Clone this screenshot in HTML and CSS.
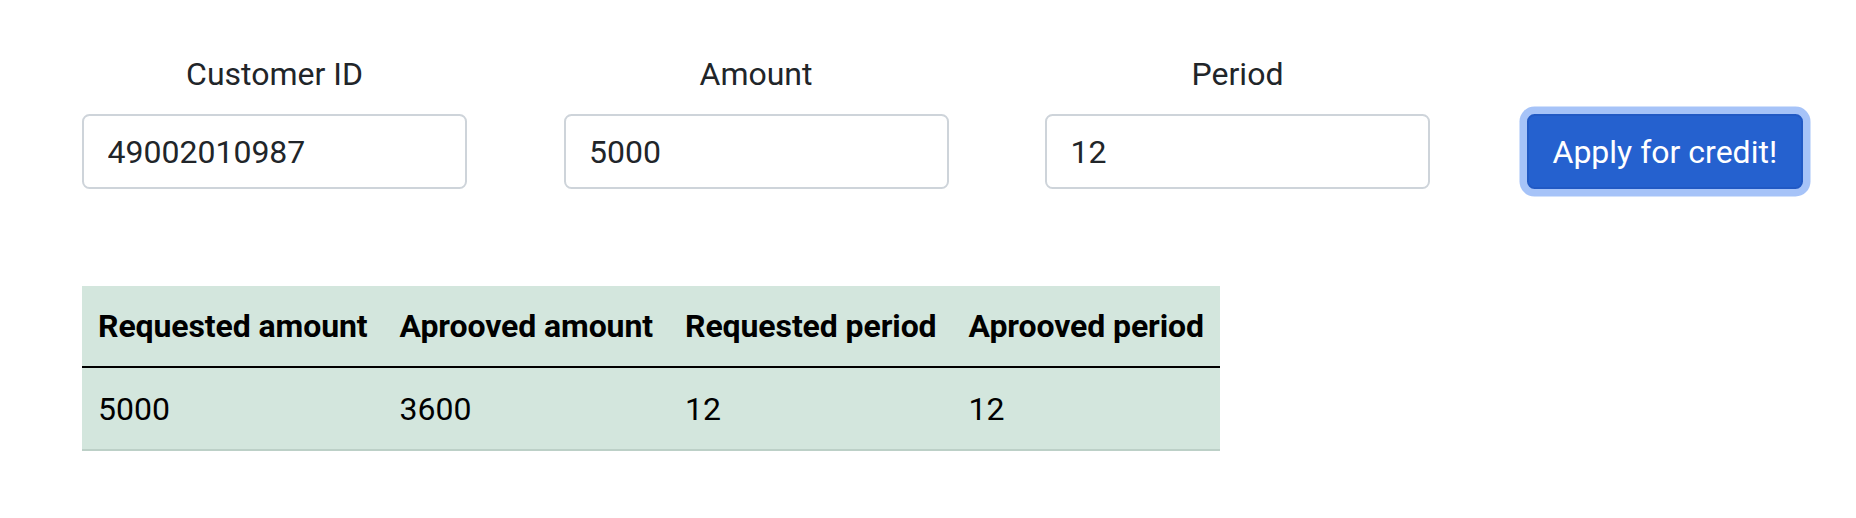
FILE: index.html
```html
<!DOCTYPE html>
<html lang="en">
<head>
<meta charset="utf-8">
<title>Credit application</title>
<link rel="stylesheet" href="styles.css">
</head>
<body>
<div class="page">
  <form class="form">
    <div class="field">
      <label class="label" for="cid">Customer ID</label>
      <input class="input" id="cid" type="text" value="49002010987">
    </div>
    <div class="field">
      <label class="label" for="amount">Amount</label>
      <input class="input" id="amount" type="text" value="5000">
    </div>
    <div class="field">
      <label class="label" for="period">Period</label>
      <input class="input" id="period" type="text" value="12">
    </div>
    <div class="action">
      <button class="btn" type="button">Apply for credit!</button>
    </div>
  </form>
  <table class="result">
    <thead>
      <tr>
        <th>Requested amount</th>
        <th>Aprooved amount</th>
        <th>Requested period</th>
        <th>Aprooved period</th>
      </tr>
    </thead>
    <tbody>
      <tr>
        <td>5000</td>
        <td>3600</td>
        <td>12</td>
        <td>12</td>
      </tr>
    </tbody>
  </table>
</div>
</body>
</html>
```
FILE: styles.css
```css
html, body {
  margin: 0;
  background: #ffffff;
}
body {
  font-family: Roboto, "Liberation Sans", sans-serif;
  font-size: 32px;
  line-height: 1.5;
  color: #212529;
}
.page {
  padding: 50px 0 0 82px;
}
.form {
  display: flex;
  align-items: flex-end;
  gap: 96.5px;
  margin: 0;
}
.field {
  width: 385px;
  display: flex;
  flex-direction: column;
  align-items: center;
}
.label {
  margin-bottom: 16px;
}
.input {
  box-sizing: border-box;
  width: 385px;
  height: 75px;
  border: 2px solid #ced4da;
  border-radius: 7.5px;
  padding: 0 23.5px;
  font: inherit;
  color: #212529;
  background: #fff;
  outline: none;
}
.action {
  display: flex;
}
.btn {
  box-sizing: border-box;
  height: 75px;
  padding: 0 24px;
  border: 2px solid #2159c4;
  border-radius: 7.5px;
  background: #2561cf;
  color: #ffffff;
  font: inherit;
  box-shadow: 0 0 0 7.5px #a6c3f8;
  cursor: pointer;
}
.result {
  margin-top: 97px;
  border-collapse: collapse;
  background: #d3e6dd;
  color: #000;
}
.result th {
  height: 80px;
  padding: 0 16px;
  text-align: left;
  font-weight: 700;
  letter-spacing: -0.1px;
  border-bottom: 2px solid #000;
}
.result td {
  height: 81px;
  padding: 0 16px;
  border-bottom: 2px solid #bcd0c7;
}
```
